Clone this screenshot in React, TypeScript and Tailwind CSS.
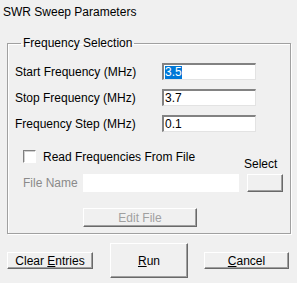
import React from 'react';

const raised =
  'border border-t-white border-l-white border-b-[#696969] border-r-[#696969] shadow-[inset_-1px_-1px_0_#a0a0a0] bg-[#f0f0f0]';
const sunken =
  'border-t-2 border-l-2 border-b border-r border-t-[#828282] border-l-[#828282] border-b-[#e3e3e3] border-r-[#e3e3e3] bg-white';

const FieldRow = ({ label, value, selected }: { label: string; value: string; selected?: boolean }) => (
  <div className="flex items-center h-[17px] mb-[9px]">
    <span className="w-[147px] leading-[14px]">{label}</span>
    <div className={`${sunken} w-[94px] h-[17px] flex items-center pl-[1px] leading-[13px]`}>
      {selected ? <span className="bg-[#0078d7] text-white">{value}</span> : <span>{value}</span>}
    </div>
  </div>
);

const App = () => {
  return (
    <div className="w-[297px] h-[283px] bg-[#f0f0f0] text-black text-[12px] font-['Liberation_Sans',sans-serif] flex flex-col overflow-hidden">
      <div className="pl-[3px] pt-[4px] text-[12px] leading-[16px]">SWR Sweep Parameters</div>

      <fieldset className="mt-[16px] ml-[7px] w-[282px] border border-[#a0a0a0] shadow-[inset_1px_1px_0_white,1px_1px_0_white] pl-[7px] pr-[7px] pt-[13px] pb-[6px]">
        <legend className="ml-[6px] px-[2px] leading-[14px]">Frequency Selection</legend>

        <FieldRow label="Start Frequency (MHz)" value="3.5" selected />
        <FieldRow label="Stop Frequency (MHz)" value="3.7" />
        <FieldRow label="Frequency Step (MHz)" value="0.1" />

        <div className="flex items-end mt-[18px]">
          <div className="flex flex-col">
            <div className="flex items-center h-[13px] pl-[8px]">
              <span className="w-[13px] h-[13px] border border-t-[#808080] border-l-[#808080] border-b-white border-r-white bg-white shadow-[inset_1px_1px_0_#d0d0d0]" />
              <span className="ml-[7px] leading-[14px]">Read Frequencies From File</span>
            </div>
            <div className="flex items-center h-[18px] mt-[11px] pl-[8px]">
              <span className="w-[60px] text-[#8a8a8a] leading-[14px]">File Name</span>
              <div className="w-[156px] h-[18px] bg-white" />
            </div>
          </div>
          <div className="flex flex-col ml-[5px]">
            <span className="leading-[14px] mb-[3px]">Select</span>
            <div className={`${raised} ml-[3px] w-[36px] h-[18px]`} />
          </div>
        </div>

        <div className={`${raised} mt-[16px] ml-[68px] w-[114px] h-[19px] flex items-center justify-center text-[#a0a0a0] leading-[14px]`}>
          Edit File
        </div>
      </fieldset>

      <div className="flex items-center mt-[9px] ml-[7px]">
        <div className={`${raised} w-[86px] h-[17px] flex items-center justify-center leading-[14px]`}>
          <span>
            Clear <u>E</u>ntries
          </span>
        </div>
        <div className={`${raised} ml-[17px] w-[78px] h-[35px] flex items-center justify-center leading-[14px]`}>
          <span>
            <u>R</u>un
          </span>
        </div>
        <div className={`${raised} ml-[16px] w-[85px] h-[17px] flex items-center justify-center leading-[14px]`}>
          <span>
            <u>C</u>ancel
          </span>
        </div>
      </div>
    </div>
  );
};

export default App;
